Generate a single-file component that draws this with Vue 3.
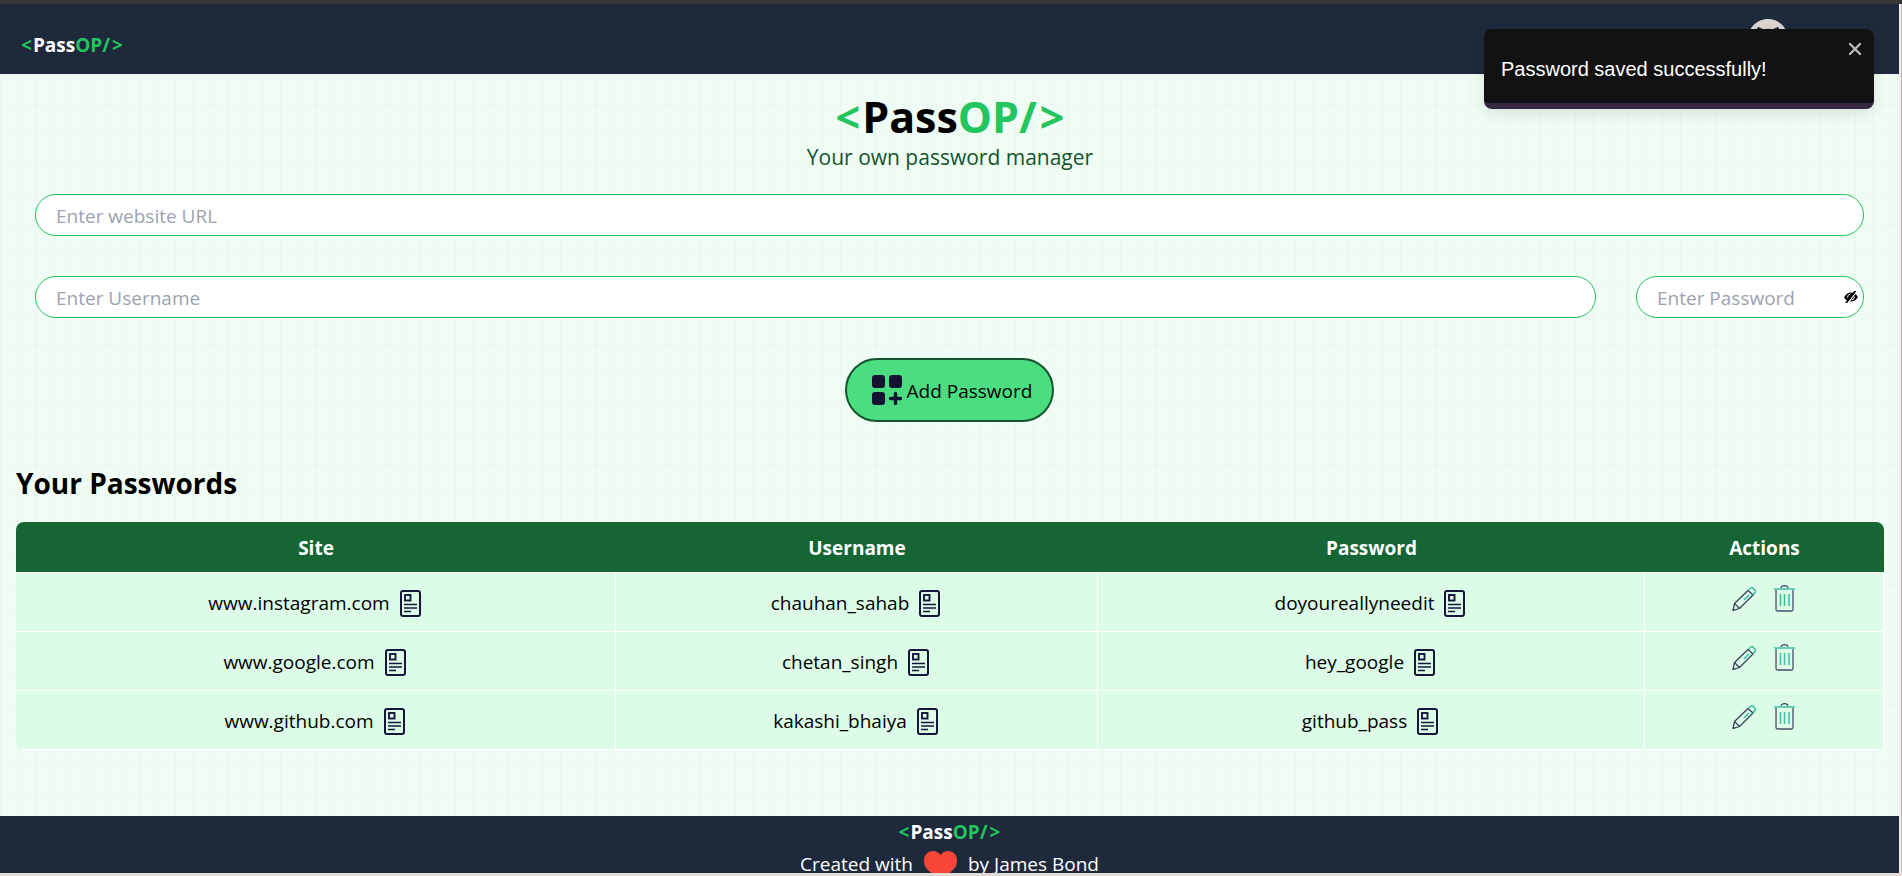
<script setup>
import { ref } from 'vue'

const site = ref('')
const username = ref('')
const password = ref('')
const toastOpen = ref(true)

const fields = ['site', 'username', 'password']
const entries = ref([
  { site: 'www.instagram.com', username: 'chauhan_sahab', password: 'doyoureallyneedit' },
  { site: 'www.google.com', username: 'chetan_singh', password: 'hey_google' },
  { site: 'www.github.com', username: 'kakashi_bhaiya', password: 'github_pass' }
])

function save() {
  if (!site.value || !username.value || !password.value) return
  entries.value.push({ site: site.value, username: username.value, password: password.value })
  site.value = username.value = password.value = ''
  toastOpen.value = true
}
function edit(i) {
  const e = entries.value.splice(i, 1)[0]
  site.value = e.site
  username.value = e.username
  password.value = e.password
}
function remove(i) {
  entries.value.splice(i, 1)
}
</script>

<template>
  <div class="window">
    <div class="page">
      <nav class="nav">
        <div class="brand"><span class="green open">&lt;</span>Pass<span class="green">OP/<span class="shut">&gt;</span></span></div>
        <a class="github" href="#" aria-label="GitHub">
          <svg viewBox="0 0 24 24" width="40" height="40"><path fill="#dcd6d2" d="M12 0C5.37 0 0 5.37 0 12c0 5.31 3.435 9.795 8.205 11.385.6.105.825-.255.825-.57 0-.285-.015-1.23-.015-2.235-3.015.555-3.795-.735-4.035-1.41-.135-.345-.72-1.41-1.23-1.695-.42-.225-1.02-.78-.015-.795.945-.015 1.62.87 1.845 1.23 1.08 1.815 2.805 1.305 3.495.99.105-.78.42-1.305.765-1.605-2.67-.3-5.46-1.335-5.46-5.925 0-1.305.465-2.385 1.23-3.225-.12-.3-.54-1.53.12-3.18 0 0 1.005-.315 3.3 1.23.96-.27 1.98-.405 3-.405s2.04.135 3 .405c2.295-1.56 3.3-1.23 3.3-1.23.66 1.65.24 2.88.12 3.18.765.84 1.23 1.905 1.23 3.225 0 4.605-2.805 5.625-5.475 5.925.435.375.81 1.095.81 2.22 0 1.605-.015 2.895-.015 3.3 0 .315.225.69.825.57A12.02 12.02 0 0 0 24 12c0-6.63-5.37-12-12-12z"/></svg>
        </a>
      </nav>

      <main class="main">
        <h1 class="title"><span class="green open">&lt;</span>Pass<span class="green">OP/<span class="shut">&gt;</span></span></h1>
        <p class="subtitle">Your own password manager</p>

        <form class="form" @submit.prevent="save">
          <input v-model="site" class="field" type="text" placeholder="Enter website URL" aria-label="Website URL">
          <div class="row">
            <input v-model="username" class="field" type="text" placeholder="Enter Username" aria-label="Username">
            <div class="secret">
              <input v-model="password" class="field" type="password" placeholder="Enter Password" aria-label="Password">
              <button class="eye" type="button" aria-label="Show password">
                <svg viewBox="0 0 16 12" width="16" height="12">
                  <path d="M1 6.500C3 2.500 6 1.500 8 1.500s5 1 7 4.500c-2 3.500-5 4.500-7 4.500s-5-1-7-4z"/>
                  <path d="M4.500 6.500a3.500 3.500 0 0 1 3-3.500M11.500 5.500a3.500 3.500 0 0 1-3 3.500" fill="none" stroke="#fff" stroke-width="1"/>
                  <path d="M4.500 12.500 13.500 0.500" stroke="#fff" stroke-width="1.400"/>
                  <path d="M3 12 12.500 0" stroke="#000" stroke-width="1.800"/>
                </svg>
              </button>
            </div>
          </div>
          <button class="add" type="submit">
            <svg viewBox="0 0 30 30" width="30" height="30" fill="#141432">
              <rect width="13" height="13" rx="3"/>
              <rect x="17" width="13" height="13" rx="3"/>
              <rect y="17" width="13" height="13" rx="3"/>
              <path d="M23.500 18.500v10M18.500 23.500h10" stroke="#141432" stroke-width="3.400" stroke-linecap="round"/>
            </svg>
            <span>Add Password</span>
          </button>
        </form>

        <h2 class="heading">Your Passwords</h2>
        <table class="table">
          <colgroup>
            <col class="c-site"><col class="c-user"><col class="c-pass"><col class="c-act">
          </colgroup>
          <thead>
            <tr><th>Site</th><th>Username</th><th>Password</th><th>Actions</th></tr>
          </thead>
          <tbody>
            <tr v-for="(entry, i) in entries" :key="entry.site">
              <td v-for="f in fields" :key="f">
                <div class="cell">
                  <span>{{ entry[f] }}</span>
                  <button class="icon" type="button" :aria-label="'Copy ' + f">
                    <svg viewBox="0 0 21 27" width="21" height="27" fill="none" stroke="#16163a" stroke-width="2">
                      <rect x="1" y="1" width="19" height="25" rx="2"/>
                      <rect x="5" y="5" width="5.500" height="5.500" stroke-width="1.900"/>
                      <path d="M4 14.500h13M4 18h13M4 21.500h7" stroke-width="1.700"/>
                    </svg>
                  </button>
                </div>
              </td>
              <td class="actions">
                <div class="tools">
                  <button class="icon" type="button" aria-label="Edit" @click="edit(i)">
                    <svg viewBox="0 0 24 24" width="24" height="24" fill="none" stroke="#3a4258" stroke-width="1.300" stroke-linejoin="round">
                      <path d="M1 23.500 2.500 16.500 16 3.500 21 8 7.500 21.500zM2.500 16.500l5 5M1 23.500l2-1"/>
                      <path d="M16.500 3 19 1q1-.8 2 .2l2 2q1 1 .2 2L21 8M12 13l5-5" stroke="#3dbfa3" stroke-width="1.600"/>
                    </svg>
                  </button>
                  <button class="icon" type="button" aria-label="Delete" @click="remove(i)">
                    <svg viewBox="0 0 21 27" width="21" height="27" fill="none" stroke="#48506a" stroke-width="1.300">
                      <path d="M7 3.500q0-2.800 3.500-2.800T14 3.500M2 5v19.500q0 1.500 1.500 1.500h14q1.500 0 1.500-1.500V5"/>
                      <path d="M0 4h21" stroke="#68ceb6" stroke-width="2"/>
                      <path d="M6.500 9v12M10.500 9v12M15 9v12" stroke="#3dbfa3" stroke-width="1.500"/>
                    </svg>
                  </button>
                </div>
              </td>
            </tr>
          </tbody>
        </table>
      </main>

      <footer class="footer">
        <div class="brand"><span class="green open">&lt;</span>Pass<span class="green">OP/<span class="shut">&gt;</span></span></div>
        <div class="credit">
          Created with
          <svg class="heart" viewBox="0 0 33 30" width="33" height="30"><path fill="#f94639" d="M16.500 30 3.500 18.500C-1 14-1 6 2.500 2.800 6.500-1 13-1 16.500 4 20-1 26.500-1 30.500 2.800 34 6 34 14 29.500 18.500z"/></svg>
          by James Bond
        </div>
      </footer>

      <div v-if="toastOpen" class="toast" role="alert">
        <span>Password saved successfully!</span>
        <button class="close" type="button" aria-label="Close" @click="toastOpen = false">
          <svg viewBox="0 0 14 14" width="14" height="14"><path d="M2 2l10 10M12 2 2 12" stroke="#b9b9b9" stroke-width="2.400" stroke-linecap="round"/></svg>
        </button>
      </div>
    </div>
    <div class="scrollbar"></div>
  </div>
</template>

<style>
body { margin: 0; }
</style>

<style scoped>
* { box-sizing: border-box; }
button { font: inherit; color: inherit; background: none; border: 0; padding: 0; cursor: pointer; }
svg { display: block; }
.window {
  display: flex;
  height: 100vh;
  border-top: 4px solid #373737;
  border-bottom: 3px solid #e5dbd5;
  font-family: "Open Sans", "Noto Sans", sans-serif;
  font-size: 19px;
  line-height: 30px;
  color: #000;
}
.page { position: relative; flex: 1; min-width: 0; overflow: hidden; }
.scrollbar { width: 3px; background: #f3efee; border-right: 1px solid #bdb5b5; }
.green { color: #22c55e; }
.open { margin-right: 1px; }
.shut { margin-left: 2px; }
.nav {
  display: flex;
  align-items: center;
  justify-content: space-between;
  height: 70px;
  padding: 0 111px 0 21px;
  background: #1e293b;
}
.nav .brand { padding-top: 12px; }
.brand { color: #fff; font-weight: 700; }
.main {
  padding: 19px 15px 66px 16px;
  background-color: #f0fdf4;
  background-image:
    linear-gradient(to right, #8080800c 1px, transparent 1px, transparent 17px, #80808006 17px, #80808006 19px, transparent 19px),
    linear-gradient(to bottom, #8080800c 1px, transparent 1px);
  background-size: 35px 30px;
}
.title { margin: 0; font-size: 43px; line-height: 48px; font-weight: 700; text-align: center; }
.title .open { margin-right: 2px; }
.title .shut { margin-left: 3px; }
.subtitle { margin: 0; font-size: 21px; line-height: 32px; color: #14532d; text-align: center; }
.form { display: flex; flex-direction: column; align-items: center; gap: 40px; padding: 21px 20px 0 19px; }
.field {
  width: 100%;
  height: 42px;
  padding: 6px 20px 4px;
  border: 1px solid #22c55e;
  border-radius: 21px;
  background: #fff;
  font: inherit;
  color: #000;
}
.field::placeholder { color: #9ca3af; opacity: 1; }
.row { display: flex; gap: 40px; width: 100%; }
.row > .field { flex: 1; }
.secret { position: relative; width: 228px; }
.eye { position: absolute; right: 5px; top: 15px; }
.add {
  display: flex;
  align-items: center;
  gap: 5px;
  height: 64px;
  padding: 0 20px 0 25px;
  border: 2px solid #14532d;
  border-radius: 32px;
  background: #4ade80;
}
.add span { padding-top: 2px; }
.heading { margin: 41px 0 19px; font-size: 28px; line-height: 40px; font-weight: 700; }
.table { width: 100%; border-spacing: 0; border-radius: 8px; overflow: hidden; table-layout: fixed; }
.c-site { width: 600px; }
.c-user { width: 482px; }
.c-pass { width: 547px; }
.c-act { width: 239px; }
th { height: 51px; padding: 2px 0 0; border-bottom: 1px solid #fff; background: #166534; color: #fff; font-weight: 700; }
td { height: 59px; padding: 0 2px 0 0; background: #dcfce7; border-right: 1px solid #fff; border-bottom: 1px solid #fff; }
.cell { display: flex; align-items: center; justify-content: center; gap: 10px; padding-top: 2px; }
.actions { vertical-align: top; }
.tools { display: flex; align-items: center; justify-content: center; gap: 18px; padding-top: 12px; }
.footer { display: flex; flex-direction: column; align-items: center; padding-top: 1px; background: #1e293b; color: #fff; }
.credit { display: flex; align-items: center; gap: 11px; height: 34px; }
.heart { margin-top: 4px; }
.toast {
  position: absolute;
  top: 25px;
  right: 25px;
  display: flex;
  align-items: center;
  width: 390px;
  height: 80px;
  padding: 6px 17px 0;
  border-bottom: 6px solid #352840;
  border-radius: 8px;
  background: #121212;
  box-shadow: 0 5px 15px rgba(0, 0, 0, 0.1);
  color: #fff;
  font-family: "Liberation Sans", Arial, sans-serif;
  font-size: 20px;
}
.close { position: absolute; top: 13px; right: 12px; }
</style>
